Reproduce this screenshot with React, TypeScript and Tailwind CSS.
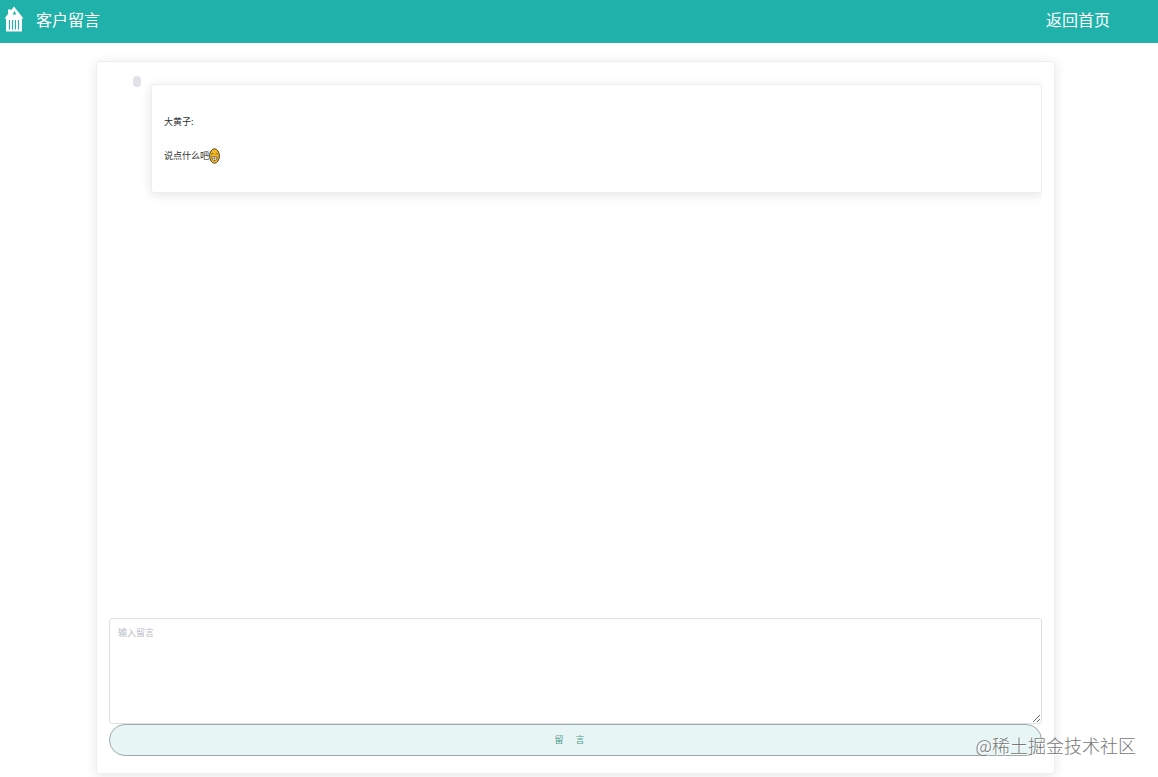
import React, { useState } from 'react';

interface Message {
  id: number;
  name: string;
  text: string;
}

const messages: Message[] = [{ id: 1, name: '大黄子', text: '说点什么吧' }];

const HouseIcon = () => (
  <svg viewBox="0 0 20 26" className="h-[26px] w-5 shrink-0" aria-hidden="true">
    <path d="M4 3.5H7V8L4 11Z" fill="#fff" />
    <path d="M10 .5L19.5 12.5H.5Z" fill="#fff" />
    <path d="M2 12H18V25.5H2Z" fill="#fff" />
    <path d="M10.4 5L12.4 8.4H8.6Z" fill="#20b2aa" />
    <path d="M5.5 14V23.5M8.5 14V23.5M11.5 14V23.5M14.5 14V23.5" stroke="#20b2aa" strokeWidth="1.1" />
  </svg>
);

const GrinIcon = () => (
  <svg viewBox="0 0 11 16" className="h-4 w-[11px] shrink-0" aria-hidden="true">
    <ellipse cx="5.5" cy="8" rx="4.9" ry="7.2" fill="#f5b921" stroke="#4d401f" strokeWidth="1" />
    <path d="M2.3 6.3L3.5 5.2L4.6 6.3M6.4 6.3L7.5 5.2L8.7 6.3" fill="none" stroke="#4d3a16" strokeWidth=".8" />
    <path d="M2.8 8.8H8.2C8.2 11.4 7.2 12.4 5.5 12.4S2.8 11.4 2.8 8.8Z" fill="#fff" stroke="#4d3a16" strokeWidth=".7" />
    <path d="M3 10.5H8M5.5 8.8V12.4" stroke="#4d3a16" strokeWidth=".4" />
  </svg>
);

const MessageItem: React.FC<{ message: Message }> = ({ message }) => (
  <li className="flex items-start gap-[10px]">
    <span className="h-[11px] w-2 shrink-0 rounded-full bg-[#e0e2e7]" />
    <div className="mt-2 flex-1 rounded-[3px] border border-[#ebeef5] bg-white px-3 pt-7 pb-[27px] shadow-[0_2px_12px_rgba(0,0,0,0.1)]">
      <p className="h-[18px] text-[9px] leading-[18px]">{message.name}:</p>
      <p className="mt-4 flex h-[18px] items-center text-[9px] leading-[18px]">
        {message.text}
        <GrinIcon />
      </p>
    </div>
  </li>
);

export default function App() {
  const [draft, setDraft] = useState('');

  return (
    <div className="relative flex min-h-screen flex-col overflow-hidden bg-white pb-[3px] font-['Noto_Sans_CJK_SC',sans-serif] text-[#303133]">
      <header className="flex h-[43px] items-center justify-between bg-[#20b2aa] pr-12 pb-[6px] pl-1 text-white">
        <div className="flex items-center gap-3">
          <HouseIcon />
          <h1 className="text-base">客户留言</h1>
        </div>
        <a href="#" className="text-base">返回首页</a>
      </header>

      <main className="mt-[18px] mr-[103px] ml-24 flex flex-1 flex-col rounded-[3px] border border-[#ebeef5] px-3 pt-[14px] pb-[17px] shadow-[0_2px_12px_rgba(0,0,0,0.1)]">
        <ul className="flex-1 overflow-hidden pl-6">
          {messages.map((message) => (
            <MessageItem key={message.id} message={message} />
          ))}
        </ul>
        <form className="flex flex-col" onSubmit={(e) => e.preventDefault()}>
          <textarea
            aria-label="输入留言"
            placeholder="输入留言"
            value={draft}
            onChange={(e) => setDraft(e.target.value)}
            className="h-[106px] w-full resize-y rounded-[3px] border border-[#dcdfe6] px-2 py-1 text-[9px] leading-5 outline-none placeholder:text-[#b8bcc6]"
          />
          <button
            type="submit"
            className="flex h-8 items-center justify-center gap-3 rounded-full border border-[#9eabad] bg-[#e8f5f5] pr-3 text-[9px] text-[#509b8b]"
          >
            <span>留</span>
            <span>言</span>
          </button>
        </form>
      </main>

      <p className="pointer-events-none absolute right-[22px] bottom-[18px] text-lg font-light text-[#777] [text-shadow:1px_1px_0_#fff]">
        @稀土掘金技术社区
      </p>
    </div>
  );
}
